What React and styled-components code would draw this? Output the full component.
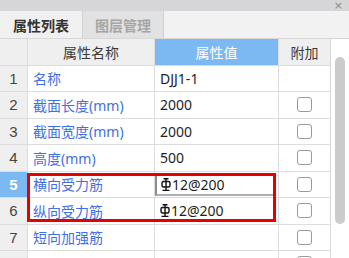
import React from "react"
import styled, { createGlobalStyle } from "styled-components"

const GlobalStyle = createGlobalStyle`
  html, body {
    margin: 0;
    padding: 0;
    background: #ffffff;
  }
  body {
    font-family: "Noto Sans CJK SC", "Noto Sans", sans-serif;
  }
`

const Panel = styled.div`
  width: 349px;
  height: 258px;
  overflow: hidden;
  display: flex;
  flex-direction: column;
  background: #fff;
`

const TitleBar = styled.div`
  height: 11px;
  flex: none;
  background: #d6d6d8;
  display: flex;
  justify-content: flex-end;
  align-items: center;
  padding-right: 6px;
  color: #8a8a8a;
  font-size: 11px;
  line-height: 11px;
  font-family: "DejaVu Sans", sans-serif;
`

const TabStrip = styled.div`
  height: 28px;
  flex: none;
  display: flex;
  background: #f2f2f2;
  border-bottom: 1px solid #d8d8d8;
  box-sizing: border-box;
`

const Tab = styled.div`
  width: ${p => p.$w}px;
  display: flex;
  align-items: center;
  justify-content: center;
  font-size: 14px;
  font-weight: 700;
  color: ${p => (p.$active ? "#333333" : "#a6a6a6")};
  background: ${p => (p.$active ? "#f0f0f0" : "#e2e2e2")};
  border-right: 1px solid #d2d2d2;
  box-sizing: border-box;
`

const Body = styled.div`
  flex: 1;
  display: flex;
  min-height: 0;
`

const Table = styled.div`
  position: relative;
  width: 331px;
  flex: none;
  border-right: 1px solid #d8d8d8;
  box-sizing: border-box;
`

const Row = styled.div`
  display: grid;
  grid-template-columns: 28px 127px 124px 51px;
  height: 26.5px;
  border-bottom: 1px solid #dcdcdc;
  box-sizing: border-box;
`

const Cell = styled.div`
  display: flex;
  align-items: center;
  border-right: 1px solid #dcdcdc;
  box-sizing: border-box;
  font-size: 14px;
  white-space: nowrap;
  overflow: hidden;
  &:last-child {
    border-right: none;
  }
`

const HeadCell = styled(Cell)`
  justify-content: center;
  background: ${p => (p.$hl ? "#7cb8f2" : "#efefef")};
  color: ${p => (p.$hl ? "#ffffff" : "#3a3a3a")};
`

const NumCell = styled(Cell)`
  justify-content: center;
  background: ${p => (p.$sel ? "#7cb8f2" : "#efefef")};
  color: ${p => (p.$sel ? "#ffffff" : "#444444")};
  font-family: "Liberation Sans", sans-serif;
  font-size: 15px;
  font-weight: ${p => (p.$sel ? 700 : 400)};
`

const NameCell = styled(Cell)`
  padding-left: 5px;
  color: #3f6fe4;
  font-family: "Noto Sans", "Noto Sans CJK SC", sans-serif;
`

const ValueCell = styled(Cell)`
  padding-left: 5px;
  color: #1e1e1e;
  font-family: "Noto Sans", "Noto Sans CJK SC", sans-serif;
`

const EditBox = styled.div`
  flex: 1;
  align-self: stretch;
  display: flex;
  align-items: center;
  margin: 1px 3px 1px -5px;
  padding-left: 4px;
  border: 2px solid #8c8c8c;
  border-right-color: #b0b0b0;
  border-bottom-color: #b0b0b0;
`

const CheckCell = styled(Cell)`
  justify-content: center;
`

const Check = styled.span`
  width: 15px;
  height: 15px;
  border: 1.5px solid #9a9a9a;
  border-radius: 3px;
  background: #fff;
  box-sizing: border-box;
`

const Highlight = styled.div`
  position: absolute;
  left: 27px;
  top: 134px;
  width: 249px;
  height: 49px;
  border: 3px solid #e60000;
  box-sizing: border-box;
  pointer-events: none;
`

const ScrollTrack = styled.div`
  flex: 1;
  display: flex;
  justify-content: center;
  padding-top: 18px;
`

const ScrollThumb = styled.div`
  width: 10px;
  height: 167px;
  border-radius: 5px;
  background: #cbcbcb;
`

const Rebar = () => (
  <svg width="10" height="13" viewBox="0 0 10 13" style={{ marginRight: 1 }}>
    <path d="M5 0.5V12.5M1.5 12.5H8.5M2.5 0.8H7.5" stroke="#111" strokeWidth="1.4" fill="none" />
    <rect x="1" y="3.5" width="8" height="5.5" rx="1.5" stroke="#111" strokeWidth="1.4" fill="none" />
  </svg>
)

const rows = [
  { name: "名称", value: "DJJ1-1", check: false },
  { name: "截面长度(mm)", value: "2000", check: true },
  { name: "截面宽度(mm)", value: "2000", check: true },
  { name: "高度(mm)", value: "500", check: true },
  { name: "横向受力筋", value: "12@200", rebar: true, check: true, sel: true },
  { name: "纵向受力筋", value: "12@200", rebar: true, check: true },
  { name: "短向加强筋", value: "", check: true },
  { name: "顶部纵向钢筋", value: "", check: true },
]

export default function App() {
  return (
    <Panel>
      <GlobalStyle />
      <TitleBar>×</TitleBar>
      <TabStrip>
        <Tab $w={83} $active>属性列表</Tab>
        <Tab $w={81}>图层管理</Tab>
      </TabStrip>
      <Body>
        <Table>
          <Row>
            <HeadCell />
            <HeadCell>属性名称</HeadCell>
            <HeadCell $hl>属性值</HeadCell>
            <HeadCell>附加</HeadCell>
          </Row>
          {rows.map((r, i) => (
            <Row key={i}>
              <NumCell $sel={r.sel}>{i + 1}</NumCell>
              <NameCell>{r.name}</NameCell>
              <ValueCell>
                {r.sel ? (
                  <EditBox>
                    <Rebar />
                    {r.value}
                  </EditBox>
                ) : (
                  <>
                    {r.rebar && <Rebar />}
                    {r.value}
                  </>
                )}
              </ValueCell>
              <CheckCell>{r.check && <Check />}</CheckCell>
            </Row>
          ))}
          <Highlight />
        </Table>
        <ScrollTrack>
          <ScrollThumb />
        </ScrollTrack>
      </Body>
    </Panel>
  )
}
